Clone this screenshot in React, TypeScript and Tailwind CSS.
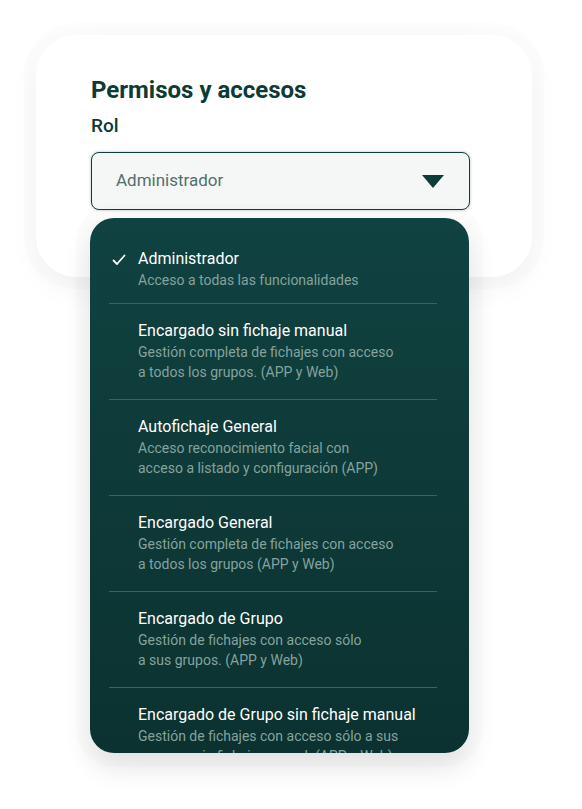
import React from 'react';

interface RoleOption {
  title: string;
  description: string[];
}

const roles: RoleOption[] = [
  { title: 'Administrador', description: ['Acceso a todas las funcionalidades'] },
  {
    title: 'Encargado sin fichaje manual',
    description: ['Gestión completa de fichajes con acceso', 'a todos los grupos. (APP y Web)'],
  },
  {
    title: 'Autofichaje General',
    description: ['Acceso reconocimiento facial con', 'acceso a listado y configuración (APP)'],
  },
  {
    title: 'Encargado General',
    description: ['Gestión completa de fichajes con acceso', 'a todos los grupos (APP y Web)'],
  },
  {
    title: 'Encargado de Grupo',
    description: ['Gestión de fichajes con acceso sólo', 'a sus grupos. (APP y Web)'],
  },
  {
    title: 'Encargado de Grupo sin fichaje manual',
    description: ['Gestión de fichajes con acceso sólo a sus', 'grupos y sin fichaje manual. (APP y Web)'],
  },
];

const CheckIcon: React.FC = () => (
  <svg width="14" height="12" viewBox="0 0 14 12" fill="none">
    <path d="M1.5 6.5 L5 10 L12.5 1.5" stroke="white" strokeWidth="1.8" strokeLinecap="round" strokeLinejoin="round" />
  </svg>
);

const App: React.FC = () => {
  const selected = 'Administrador';

  return (
    <div
      className="relative w-[582px] h-[809px] bg-white overflow-hidden"
      style={{ fontFamily: 'Roboto, "Noto Sans", sans-serif' }}
    >
      {/* Card */}
      <div className="absolute left-[36px] top-[35px] w-[496px] h-[242px] rounded-[40px] bg-white shadow-[0_0_0_12px_rgba(0,0,0,0.012),0_12px_30px_rgba(0,0,0,0.045)] pl-[55px] pr-[62px] pt-[40px]">
        <h2 className="text-[24px] leading-[30px] font-bold text-[#0c3a35]">Permisos y accesos</h2>
        <div className="mt-[10px] text-[19px] leading-[22px] font-medium text-[#0c3a35]">Rol</div>

        {/* Select */}
        <div className="mt-[15px] h-[58px] w-[379px] rounded-[8px] border border-[#103f3b] bg-[#f5f7f6] shadow-[0_0_3px_rgba(16,63,59,0.35)] flex items-center justify-between pl-[24px] pr-[25px]">
          <span className="text-[17px] text-[#52706b]">{selected}</span>
          <svg width="22" height="13" viewBox="0 0 22 13">
            <polygon points="0,0 22,0 11,13" fill="#0e3b37" />
          </svg>
        </div>
      </div>

      {/* Dropdown menu */}
      <div className="absolute left-[90px] top-[218px] w-[379px] h-[535px] rounded-[24px] overflow-hidden bg-gradient-to-b from-[#104241] to-[#0b3230] shadow-[0_0_0_14px_rgba(0,0,0,0.012),0_14px_28px_rgba(0,0,0,0.11)] pt-[14px]">
        {roles.map((role, i) => (
          <div key={role.title} className={i > 0 ? 'border-t border-[#2b6a65] ml-[19px] mr-[32px]' : 'ml-[19px] mr-[32px]'}>
            <div className={`relative pl-[29px] pt-4 ${i === 0 ? 'pb-[13px]' : 'pb-[17px]'}`}>
              {role.title === selected && (
                <span className="absolute left-[3px] top-[22px]">
                  <CheckIcon />
                </span>
              )}
              <div className="text-[16px] leading-[22px] text-white">{role.title}</div>
              {role.description.map((line) => (
                <div key={line} className="text-[14px] leading-5 text-[#86a29d]">
                  {line}
                </div>
              ))}
            </div>
          </div>
        ))}
      </div>
    </div>
  );
};

export default App;
